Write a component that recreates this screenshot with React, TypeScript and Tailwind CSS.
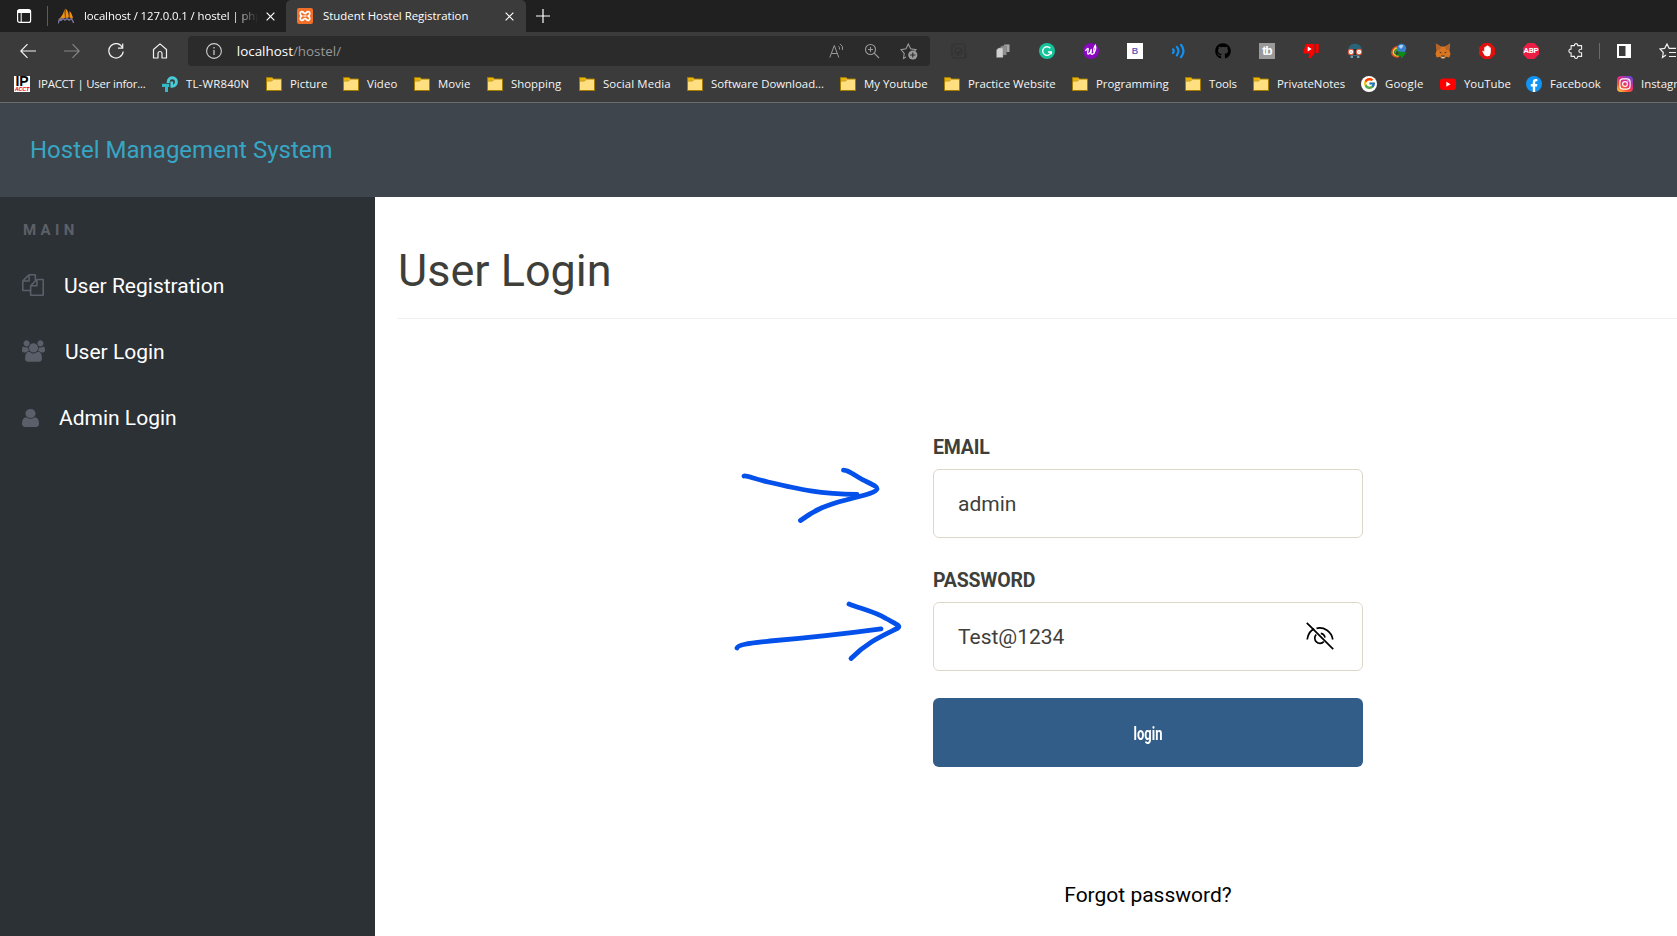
import React from "react";
import { FcGoogle } from "react-icons/fc";
import { FaGithub } from "react-icons/fa";

type Kids = { children?: React.ReactNode };

/* 16px icon canvas */
function I16({ children }: Kids) {
  return (
    <svg viewBox="0 0 16 16" className="block h-4 w-4 shrink-0" fill="none">
      {children}
    </svg>
  );
}

function Folder() {
  return (
    <I16>
      <path d="M.5 1.5h5.6l1.2 1.5h8.2v11.5H.5z" fill="#ffdf80" stroke="#a67c00" />
      <path d="M1 2h4.8l1 1.2-1.6 1.5H1z" fill="#eab308" />
      <path d="M1 5h4.6l1.5-1.5" stroke="#b98e10" strokeWidth=".9" />
    </I16>
  );
}

function IpacctIcon() {
  return (
    <span className="flex h-4 w-4 shrink-0 flex-col items-center bg-white font-['Liberation_Sans'] font-bold">
      <span className="text-[14px] leading-[11px] text-black">IP</span>
      <span className="text-[5.5px] italic leading-[5px] text-red-600">ACCT</span>
    </span>
  );
}

function TpIcon() {
  return (
    <I16>
      <path d="M6.200 7V5.700a4.100 4.100 0 1 1 4.100 4.300H9" stroke="#4acbd6" strokeWidth="3" />
      <path d="M0 7.800h7.200v3.200H6V16H3v-5H0z" fill="#35b8c6" />
      <path d="M8.400 5.500h2.700v6H8.400z" fill="#4acbd6" />
    </I16>
  );
}

function YoutubeIcon() {
  return (
    <I16>
      <rect x="0" y="2.5" width="16" height="11.4" rx="3" fill="#f00" />
      <path d="M6.3 5.7v5l4.3-2.5z" fill="#fff" />
    </I16>
  );
}

function FacebookIcon() {
  return (
    <I16>
      <circle cx="8" cy="8" r="8" fill="#1195f5" />
      <path d="M6.8 16v-5.6H4.8V8h2V6.3c0-2.1 1.2-3.2 3-3.2.9 0 1.6.1 1.6.1v2h-1c-1 0-1.2.6-1.2 1.3V8h2.2l-.4 2.4H9.2V16z" fill="#fff" />
    </I16>
  );
}

function InstagramIcon() {
  return (
    <I16>
      <defs>
        <linearGradient id="ig" x1="2" y1="16" x2="13" y2="0" gradientUnits="userSpaceOnUse">
          <stop offset="0" stopColor="#ffc94f" />
          <stop offset=".3" stopColor="#f7542f" />
          <stop offset=".6" stopColor="#dc2b83" />
          <stop offset="1" stopColor="#6a45d8" />
        </linearGradient>
      </defs>
      <rect width="16" height="16" rx="3.8" fill="url(#ig)" />
      <rect x="2.9" y="2.9" width="10.2" height="10.2" rx="3" stroke="#fff" strokeWidth="1.1" />
      <circle cx="8" cy="8" r="2.4" stroke="#fff" strokeWidth="1.1" />
      <circle cx="11" cy="5" r=".7" fill="#fff" />
    </I16>
  );
}

function GoogleIcon() {
  return (
    <span className="flex h-4 w-4 shrink-0 items-center justify-center rounded-full bg-white">
      <FcGoogle className="h-[13px] w-[13px]" />
    </span>
  );
}

const bookmarks = [
  { label: "IPACCT | User infor...", icon: <IpacctIcon />, w: "w-[148px] tracking-[-0.2px]" },
  { label: "TL-WR840N", icon: <TpIcon />, w: "w-[104px] tracking-[0.2px]" },
  { label: "Picture", icon: <Folder />, w: "w-[77px]" },
  { label: "Video", icon: <Folder />, w: "w-[71px] tracking-[0.1px]" },
  { label: "Movie", icon: <Folder />, w: "w-[73px] tracking-[0.1px]" },
  { label: "Shopping", icon: <Folder />, w: "w-[92px]" },
  { label: "Social Media", icon: <Folder />, w: "w-[108px] tracking-[0.1px]" },
  { label: "Software Download...", icon: <Folder />, w: "w-[153px]" },
  { label: "My Youtube", icon: <Folder />, w: "w-[104px]" },
  { label: "Practice Website", icon: <Folder />, w: "w-[128px]" },
  { label: "Programming", icon: <Folder />, w: "w-[113px]" },
  { label: "Tools", icon: <Folder />, w: "w-[68px] tracking-[-0.1px]" },
  { label: "PrivateNotes", icon: <Folder />, w: "w-[108px]" },
  { label: "Google", icon: <GoogleIcon />, w: "w-[79px] tracking-[0.2px]" },
  { label: "YouTube", icon: <YoutubeIcon />, w: "w-[86px]" },
  { label: "Facebook", icon: <FacebookIcon />, w: "w-[91px]" },
  { label: "Instagram", icon: <InstagramIcon />, w: "w-[90px]" },
];

const extensions = [
  <I16 key="cam">
    <g stroke="#333333" strokeWidth="1.2">
      <rect x="1" y="1" width="13" height="14" rx="2" />
      <circle cx="7.5" cy="8.5" r="3.5" />
      <path d="M5 8.5 7 10.5 10 7M3 3.5h2M15 9v6" />
    </g>
  </I16>,
  <I16 key="copies">
    <path d="M8 3.500 9.500 1.500h5V9H8z" fill="#a9a9a9" />
    <path d="M5 4.500 6.500 3h5v9H5z" fill="#8f8f8f" stroke="#666" strokeWidth=".4" />
    <path d="M1.500 7 3.500 5h4.500v9.500H1.500z" fill="#d0d0d0" stroke="#808080" strokeWidth=".4" />
  </I16>,
  <I16 key="grammar">
    <circle cx="8" cy="8" r="8" fill="#15c39a" />
    <path d="M11.300 5.300A4.300 4.300 0 1 0 12.200 9H9M12.300 8.600v2.700" stroke="#fff" strokeWidth="1.400" />
  </I16>,
  <I16 key="w">
    <circle cx="8" cy="8" r="8" fill="#8a08bd" />
    <path d="M2.700 7.500C4.500 5 5.700 4.600 5 7.500S4.500 12 6.300 10.500 8 6 8.300 6.500 7 11.700 9 11.300C12 10.500 13.500 5 12.300 2.300 11 4.500 10.300 8 11.300 10" stroke="#fff" strokeWidth="1.300" strokeLinecap="round" />
  </I16>,
  <span key="b" className="flex h-4 w-4 items-center justify-center bg-white font-['Liberation_Sans'] text-[9px] font-bold leading-none text-[#6a63b8]">
    B
  </span>,
  <I16 key="waves">
    <g stroke="#1290f3" strokeWidth="2.200" strokeLinecap="round">
      <path d="M2 6.300Q3.600 8 2 10M5.900 3.800Q9 8 5.900 12.300M10 1.800Q15 8 10 14.200" />
    </g>
  </I16>,
  <span key="gh" className="relative flex h-4 w-4 rounded-full bg-[#3a3a3a]">
    <FaGithub className="h-4 w-4 text-black" />
  </span>,
  <span key="tb" className="flex h-4 w-4 items-center justify-center bg-[#999] font-['Liberation_Sans'] text-[12px] font-bold leading-none tracking-[-0.8px] text-white">
    tb
  </span>,
  <I16 key="dislike">
    <path d="M3 1h8.500v9.500L7.800 15H5.500l.8-4.500H.5V8z" fill="#f00" />
    <path d="M12.700 1h3v9h-3z" fill="#f00" />
    <path d="M4.700 3.500v5l4-2.500z" fill="#fff" />
  </I16>,
  <I16 key="mask">
    <path d="M1 7.500C1.300 3.500 4 .8 8 .8S14.700 3.500 15 7.500z" fill="#2a6478" />
    <path d="M3 6h10v9H3z" fill="#24333c" />
    <path d="M3.500 12.500h9v2.500h-9z" fill="#6c9fb0" />
    <circle cx="4" cy="9" r="2.700" fill="#fff" stroke="#e2573e" strokeWidth="1.100" />
    <circle cx="12" cy="9" r="2.700" fill="#fff" stroke="#e2573e" strokeWidth="1.100" />
    <path d="M3 9h2M11 9h2" stroke="#999" strokeWidth=".7" />
    <path d="M6 14h4" stroke="#111" strokeWidth="1.400" />
  </I16>,
  <I16 key="idm">
    <path d="M6.500 3.500C2 4 0 8 1 11S5.500 14.500 8 13.500" stroke="#e8432a" strokeWidth="1.300" />
    <path d="M6.500 4.800C3 5.500 1.800 8.500 2.500 10.500S6 13.300 8 12.500" stroke="#f3d321" strokeWidth="1.600" />
    <path d="M6.500 6.500C4.500 7.500 3.800 9 4.500 10.500" stroke="#2aa336" strokeWidth="1.500" />
    <circle cx="10.500" cy="5.500" r="4.700" fill="#3b7fd0" />
    <path d="M7.500 3.500Q10 .5 12.500 3L10 6z" fill="#a8d4f2" />
    <path d="M6 8 15.800 9.500 10.500 15.500 9.500 13 4.500 12.500 8 10.500z" fill="#0e8a1a" />
  </I16>,
  <I16 key="fox">
    <path d="M.8.5 6 3.500h4L15.200.5 14.300 7l1.200 4-1.200 3.500-3.300-.8L9.500 15.500h-3L5 13.700l-3.300.8L.5 11l1.200-4z" fill="#d9761f" />
    <path d="m.8.500 5.200 3L5 7H1.700zM15.200.500 10 3.500 11 7h3.300z" fill="#b5642a" />
    <path d="m4 8.500 2.500 1-.5.9zM12 8.500l-2.500 1 .5.900z" fill="#2b2b33" />
    <path d="m6.300 12.500.4 1.800h2.600l.4-1.800z" fill="#4a3020" />
    <path d="m6 13.800.8 1.500h2.400l.8-1.500z" fill="#d9c8b8" />
  </I16>,
  <I16 key="hand">
    <path d="M4.700 0h6.600L16 4.700v6.600L11.300 16H4.700L0 11.300V4.700z" fill="#e0100c" />
    <path d="M5.200 4.300v4.500L4 7.500l-.8.7 2.600 4.600c.5.600 4.300.700 4.900 0 .7-1 1.100-2.500 1.100-4.200V4.500h-1.300V3.200H9.200V2.400H7.700v.9H6.500v1z" fill="#fff" />
  </I16>,
  <span key="abp" className="relative flex h-4 w-4 items-center justify-center">
    <svg viewBox="0 0 16 16" className="absolute inset-0 h-4 w-4">
      <path d="M4.700 0h6.600L16 4.700v6.600L11.300 16H4.700L0 11.300V4.700z" fill="#ed1e45" />
    </svg>
    <span className="relative font-['Roboto'] text-[8px] font-bold leading-none tracking-[-0.2px] text-white">ABP</span>
  </span>,
  <I16 key="puzzle">
    <path
      d="M4.200 2.600h2.300c-.2-1.300.5-2 1.600-2s1.800.7 1.600 2h3.900v3.700c-1.800-.3-2.700.5-2.700 1.700s.9 2 2.700 1.700v3.700H9.700c.2 1.300-.5 2-1.600 2s-1.800-.7-1.600-2H3.100V9.800c-1.500.2-2.200-.6-2.200-1.800s.7-2 2.200-1.800V2.600z"
      stroke="#f0f0f0"
      strokeWidth="1.100"
      strokeLinejoin="round"
      transform="translate(1 0)"
    />
  </I16>,
];

function BrowserTabs() {
  return (
    <div className="flex h-8 bg-[#202020] text-[11.4px] text-white">
      <div className="flex w-[286px] items-center pl-4">
        <I16>
          <rect x="1.600" y="1.600" width="13" height="12.800" rx="2" stroke="#fff" strokeWidth="1.200" />
          <path d="M1.600 2h13v3h-13z" fill="#fff" />
          <path d="M5.200 5v9" stroke="#fff" />
        </I16>
        <span className="ml-[15px] h-5 w-px bg-[#5c5c5c]" />
        <svg viewBox="0 0 16 16" className="ml-[10px] h-4 w-4 shrink-0">
          <path d="M6.500 1 7 10 1.500 11C3.500 8 6 5 6.500 1zM7.500.5c2.500 2 3.500 5.500 3.300 9L7.500 10zM11.500 3c2 2 3 4.500 3.500 7.500l-3.500-1z" fill="#f29111" />
          <path d="M0 15.500 1.500 11l2 1 1.500-1.500 2 1.500 2-1.500 2 1.500 2.500-1.300L15.800 15" fill="none" stroke="#77739c" strokeWidth="1.500" />
        </svg>
        <span className="ml-[10px] w-[174px] whitespace-nowrap tracking-[-0.1px] [mask-image:linear-gradient(to_right,#000_86%,transparent_100%)]">
          localhost / 127.0.0.1 / hostel | php
        </span>
        <svg viewBox="0 0 10 10" className="ml-[8px] h-[9px] w-[9px] shrink-0">
          <path d="m.7.700 8.600 8.600M9.300.700.700 9.300" stroke="#fff" strokeWidth="1.300" />
        </svg>
      </div>
      <div className="flex w-[240px] items-center rounded-t-[5px] bg-[#3b3b3b] pl-[11px]">
        <I16>
          <rect width="16" height="16" rx="2" fill="#f0702a" />
          <path d="M4.200 3.800c2.300-.8 2.300 1.700 3.800 1.700s1.500-2.500 3.800-1.700c1.700.7 1 3.200-.4 4.200 1.400 1 2.100 3.500.4 4.200-2.300.8-2.300-1.700-3.800-1.700s-1.500 2.500-3.800 1.700c-1.700-.7-1-3.200.4-4.200-1.400-1-2.100-3.500-.4-4.200z" fill="none" stroke="#fff" strokeWidth="1.700" />
          <path d="M6.300 8h3.400" stroke="#fff" strokeWidth="1.200" />
        </I16>
        <span className="ml-[10px] w-[182px] whitespace-nowrap">Student Hostel Registration</span>
        <svg viewBox="0 0 10 10" className="h-[9px] w-[9px] shrink-0">
          <path d="m.7.700 8.600 8.600M9.300.700.700 9.300" stroke="#fff" strokeWidth="1.300" />
        </svg>
      </div>
      <svg viewBox="0 0 14 14" className="ml-[10px] mt-[9px] h-[14px] w-[14px]">
        <path d="M7 0v14M0 7h14" stroke="#fff" strokeWidth="1.200" />
      </svg>
    </div>
  );
}

function Toolbar() {
  return (
    <div className="flex h-[37px] items-center pl-5 pt-px">
      <div className="flex w-[168px] gap-7">
        <I16>
          <path d="M16 8H1M7.500 1.200.8 8l6.700 6.800" stroke="#f2f2f2" strokeWidth="1.200" />
        </I16>
        <I16>
          <path d="M0 8h15M8.500 1.200 15.200 8l-6.700 6.800" stroke="#858585" strokeWidth="1.200" />
        </I16>
        <I16>
          <path d="M14.500 4.600A7.200 7.200 0 1 0 15.200 8.500M14.700.5v4.700H10" stroke="#f2f2f2" strokeWidth="1.200" />
        </I16>
        <I16>
          <path d="M1.500 6.500 8 .9l6.500 5.600V15H10v-4.500a2 2 0 0 0-4 0V15H1.500z" stroke="#f2f2f2" strokeWidth="1.200" strokeLinejoin="round" />
        </I16>
      </div>
      <div className="flex h-[30px] w-[743px] items-center rounded bg-[#2b2b2b] pl-[18px] text-[13.4px] text-white">
        <I16>
          <circle cx="8" cy="8" r="7.400" stroke="#d0d0d0" strokeWidth="1.100" />
          <path d="M8 7v5M8 4v1.500" stroke="#d0d0d0" strokeWidth="1.200" />
        </I16>
        <span className="ml-[15px] w-[591px]">
          localhost<span className="text-[#999]">/hostel/</span>
        </span>
        <span className="flex items-center gap-5">
          <svg viewBox="0 0 16 16" className="h-4 w-4" fill="none" stroke="#9a9a9a">
            <path d="M1.800 14.500 6.300 2.500l4.500 12M3.400 10.500h5.900M10.500 3.200q1.500 1.200 1 3.200M12 .900q3.500 2 2.500 6" />
          </svg>
          <svg viewBox="0 0 16 16" className="h-4 w-4" fill="none" stroke="#9a9a9a" strokeWidth="1.100">
            <circle cx="6.500" cy="6.500" r="5" />
            <path d="m10.200 10.200 4.800 4.800M6.500 4v5M4 6.500h5" />
          </svg>
          <svg viewBox="0 0 18 18" className="h-[18px] w-[18px]" fill="none" stroke="#9a9a9a" strokeWidth="1.100">
            <path d="m6 15-2.500 1.500.7-5L1 7.700l5-.9L8.300 2l2.300 4.800 5.400.9-2 2" />
            <circle cx="12.800" cy="13" r="4.600" fill="#9a9a9a" stroke="none" />
            <path d="M12.800 10.400v5.200M10.200 13h5.200" stroke="#2b2b2b" />
          </svg>
        </span>
      </div>
      <div className="ml-[21px] flex items-center gap-7">
        {extensions}
      </div>
      <span className="ml-4 h-4 w-px bg-[#6a6a6a]" />
      <svg viewBox="0 0 14 14" className="ml-[17px] h-[14px] w-[14px] shrink-0">
        <path d="M0 0h14v14H0zM2 2v10h6.500V2z" fill="#fff" fillRule="evenodd" />
      </svg>
      <svg viewBox="0 0 18 16" className="ml-[28px] h-4 w-[18px] shrink-0" fill="none" stroke="#f0f0f0" strokeWidth="1.200">
        <path d="m7 12-3.500 2.500.8-5L1 6l4.700-.6L8 1l2.200 4.400H17M10 9.500h7M10 13.500h7" />
      </svg>
    </div>
  );
}

function Bookmarks() {
  return (
    <div className="flex h-[30px] items-center overflow-hidden pl-[14px] text-[11.4px] text-[#f5f5f5]">
      {bookmarks.map((b) => (
        <div key={b.label} className={"flex shrink-0 items-center gap-2 whitespace-nowrap " + b.w}>
          {b.icon}
          <span className="-mt-px">{b.label}</span>
        </div>
      ))}
    </div>
  );
}

function Sidebar() {
  return (
    <nav className="w-[375px] shrink-0 bg-[#2c3136] pl-[22px] text-[21px] text-white">
      <h2 className="mt-[22px] h-[23px] pl-px text-[15px] font-bold leading-[23px] tracking-[4.3px] text-[#5c6068]">MAIN</h2>
      <a className="mt-[11px] flex h-[66px] items-center">
        <svg viewBox="0 0 1792 1792" className="-mt-0.5 mr-[20px] h-[22px] w-[22px] fill-[#5a5f69]">
          <path d="M1696 384q40 0 68 28t28 68v1216q0 40-28 68t-68 28h-960q-40 0-68-28t-28-68v-288h-544q-40 0-68-28t-28-68v-672q0-40 20-88t48-76l408-408q28-28 76-48t88-20h416q40 0 68 28t28 68v328q68-40 128-40h416zm-544 213l-299 299h299v-299zm-640-384l-299 299h299v-299zm196 647l316-316v-416h-384v416q0 40-28 68t-68 28h-416v640h512v-256q0-40 20-88t48-76zm956 804v-1152h-384v416q0 40-28 68t-68 28h-416v640h896z" />
        </svg>
        <span className="pt-0.5">User Registration</span>
      </a>
      <a className="flex h-[66px] items-center">
        <svg viewBox="-64 0 1920 1792" className="-mt-0.5 mr-[20px] h-[22px] w-[23px] fill-[#5a5f69]">
          <path d="M529 896q-162 5-265 128h-134q-82 0-138-40.500t-56-118.500q0-353 124-353 6 0 43.500 21t97.500 42.500 119 21.500q67 0 133-23-5 37-5 66 0 139 81 256zm1071 637q0 120-73 189.500t-194 69.500h-874q-121 0-194-69.500t-73-189.500q0-53 3.500-103.500t14-109 26.500-108.500 43-97.500 62-81 85.500-53.500 111.500-20q10 0 43 21.500t73 48 107 48 135 21.500 135-21.500 107-48 73-48 43-21.500q61 0 111.500 20t85.500 53.500 62 81 43 97.500 26.500 108.500 14 109 3.500 103.500zm-1024-1277q0 106-75 181t-181 75-181-75-75-181 75-181 181-75 181 75 75 181zm704 384q0 159-112.500 271.500t-271.500 112.500-271.500-112.500-112.500-271.500 112.500-271.500 271.500-112.500 271.500 112.500 112.500 271.500zm576 225q0 78-56 118.500t-138 40.500h-134q-103-123-265-128 81-117 81-256 0-29-5-66 66 23 133 23 59 0 119-21.500t97.500-42.500 43.500-21q124 0 124 353zm-128-609q0 106-75 181t-181 75-181-75-75-181 75-181 181-75 181 75 75 181z" />
        </svg>
        <span className="pt-0.5">User Login</span>
      </a>
      <a className="flex h-[66px] items-center">
        <svg viewBox="256 128 1280 1536" className="mr-[20px] h-[18px] w-[17px] fill-[#5a5f69]" preserveAspectRatio="none">
          <path d="M1536 1399q0 109-62.500 187t-150.500 78h-854q-88 0-150.500-78t-62.500-187q0-85 8.500-160.500t31.500-152 58.500-131 94-89 134.500-34.500q131 128 313 128t313-128q76 0 134.500 34.500t94 89 58.500 131 31.500 152 8.500 160.500zm-256-887q0 159-112.500 271.500t-271.500 112.500-271.500-112.500-112.500-271.500 112.500-271.500 271.500-112.500 271.500 112.500 112.500 271.500z" />
        </svg>
        <span className="pt-0.5">Admin Login</span>
      </a>
    </nav>
  );
}

function LoginForm() {
  return (
    <form className="ml-[558px] flex w-[430px] flex-col pt-[115px] text-[21px]">
      <label className="h-[35px] text-[19.5px] font-bold leading-7 tracking-[-0.2px]">EMAIL</label>
      <div className="flex h-[69px] items-center rounded-md border border-[#dfd7ca] px-6 pt-0.5">admin</div>
      <label className="mt-[29px] h-[35px] text-[19.5px] font-bold leading-7 tracking-[-0.2px]">PASSWORD</label>
      <div className="flex h-[69px] items-center justify-between rounded-md border border-[#dfd7ca] pl-6 pr-7">
        <span className="pt-0.5">Test@1234</span>
        <svg viewBox="0 0 28 28" className="-mt-px h-7 w-7" fill="none" stroke="#000" strokeWidth="1.700">
          <path d="M1.200 17.500C2 12 5 8.200 8.200 6.900M10.500 6.300C18 4.500 25.500 9.500 26.800 17.500" />
          <path d="M10.200 12.500a5.200 5.200 0 1 0 7.600 7.200M14.800 11.300a5.200 5.200 0 0 1 4.200 4.400" />
          <path d="m.8.800 26.400 26.400" />
        </svg>
      </div>
      <button type="button" className="mt-[27px] flex h-[69px] items-center justify-center rounded-md bg-[#325d88] pt-0.5 text-white">
        <span className="inline-block scale-x-[0.72] text-[18px] font-bold">login</span>
      </button>
      <a className="mt-[114px] text-center leading-7 text-black">Forgot password?</a>
    </form>
  );
}

function PenArrows() {
  return (
    <svg
      viewBox="730 460 180 210"
      className="pointer-events-none absolute left-[355px] top-[263px] h-[210px] w-[180px]"
      fill="none"
      stroke="#0450ea"
      strokeWidth="4.800"
      strokeLinecap="round"
      strokeLinejoin="round"
    >
      <path d="M744 476C747 475.500 753 478.500 768 482 800 489.500 820 494 857 494.500" />
      <path d="M843.500 470.200C850 470.500 854 475.500 862 479.300 872 484.500 877.500 486.500 877 489 876 493 858 496.500 846 500 828 504.500 815 509.500 800.500 520.500" />
      <path d="M737 648C738 644.500 748 643.500 770 641 810 637.500 850 633 881 628.800" />
      <path d="M849 604C862 609 877 612.500 886 618.500 896 624 901 625.500 898 628 882 636 867 642 851 658.500" />
    </svg>
  );
}

export default function App() {
  return (
    <div className="flex h-[936px] w-full flex-col overflow-hidden bg-white">
      <div className="h-[103px] shrink-0 overflow-hidden border-b border-[#6b6b6b] bg-[#3b3b3b] font-['Open_Sans',sans-serif]">
        <BrowserTabs />
        <Toolbar />
        <Bookmarks />
      </div>
      <header className="flex h-[94px] shrink-0 items-center bg-[#3e454c] pl-7 font-['Roboto',sans-serif] text-2xl text-[#37a6c4]">
        <span className="pl-0.5">Hostel Management System</span>
      </header>
      <div className="flex min-h-0 flex-1 font-['Roboto',sans-serif]">
        <Sidebar />
        <main className="relative flex-1 text-[#3e3f3a]">
          <h1 className="ml-[23px] h-[122px] border-b border-[#eee] pt-[46px] text-[45px] leading-[56px]">User Login</h1>
          <LoginForm />
          <PenArrows />
        </main>
      </div>
    </div>
  );
}
